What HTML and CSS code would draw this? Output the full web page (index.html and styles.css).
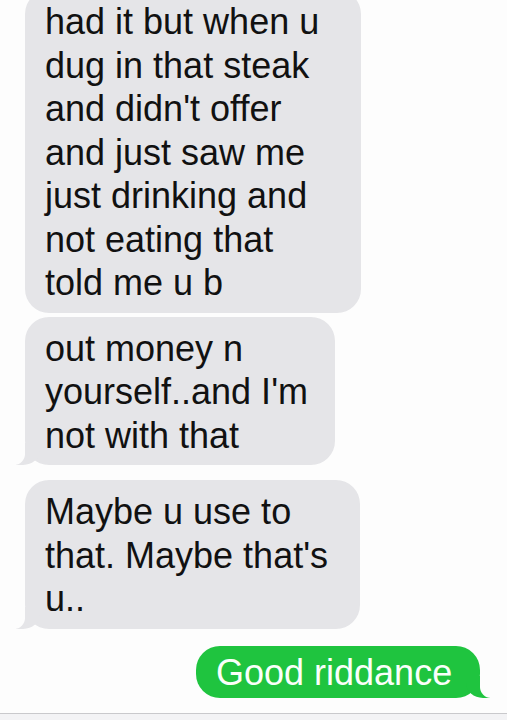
FILE: index.html
```html
<!DOCTYPE html>
<html lang="en">
<head>
  <meta charset="UTF-8" />
  <meta name="viewport" content="width=device-width, initial-scale=1" />
  <title>Messages</title>
  <link rel="stylesheet" href="styles.css">
</head>
<body>

<div class="thread">
  <div class="bubble in first">
    had it but when u<br>
    dug in that steak<br>
    and didn't offer<br>
    and just saw me<br>
    just drinking and<br>
    not eating that<br>
    told me u b
  </div>
  <div class="bubble in tail second">
    out money n<br>
    yourself..and I'm<br>
    not with that
  </div>
  <div class="bubble in tail third">
    Maybe u use to<br>
    that. Maybe that's<br>
    u..
  </div>
  <div class="bubble out tail">Good riddance</div>
</div>

<div class="input-bar"></div>

</body>
</html>
```

FILE: styles.css
```css
/* Reset și font */
* {
  box-sizing: border-box;
}
body {
  margin: 0;
  height: 720px;
  overflow: hidden;
  background: #fdfdfd;
  font-family: 'Liberation Sans', Arial, sans-serif;
  color: #111;
}

.thread {
  display: flex;
  flex-direction: column;
  align-items: flex-start;
  padding: 0 27px 0 25px;
  margin-top: -10px;
  height: 724px;
}

.bubble {
  position: relative;
  font-size: 36px;
  line-height: 43.5px;
  padding: 10px 20px 8px 20px;
  border-radius: 24px;
  background: #e5e5e8;
}

.first {
  width: 336px;
}
.second {
  width: 310px;
  margin-top: 4px;
}
.third {
  width: 335px;
  margin-top: 15px;
}

.out {
  align-self: flex-end;
  width: 284px;
  margin-top: 17px;
  padding: 1px 20px 0;
  line-height: 51px;
  background: #1fc43f;
  color: #fafffa;
}

/* coada bulei */
.tail::before,
.tail::after {
  content: "";
  position: absolute;
  bottom: 0;
  height: 22px;
}
.in.tail::before {
  left: -9px;
  width: 24px;
  background: #e5e5e8;
  border-bottom-right-radius: 17px 15px;
}
.in.tail::after {
  left: -11px;
  width: 11px;
  background: #fdfdfd;
  border-bottom-right-radius: 11px;
}
.out.tail::before {
  right: -10px;
  width: 24px;
  background: #1fc43f;
  border-bottom-left-radius: 17px 15px;
}
.out.tail::after {
  right: -11px;
  width: 11px;
  background: #fdfdfd;
  border-bottom-left-radius: 11px;
}

.input-bar {
  position: absolute;
  left: 0;
  right: 0;
  top: 713px;
  height: 7px;
  border-top: 1px solid #c9c9cc;
  background: #f3f3f5;
}
```
